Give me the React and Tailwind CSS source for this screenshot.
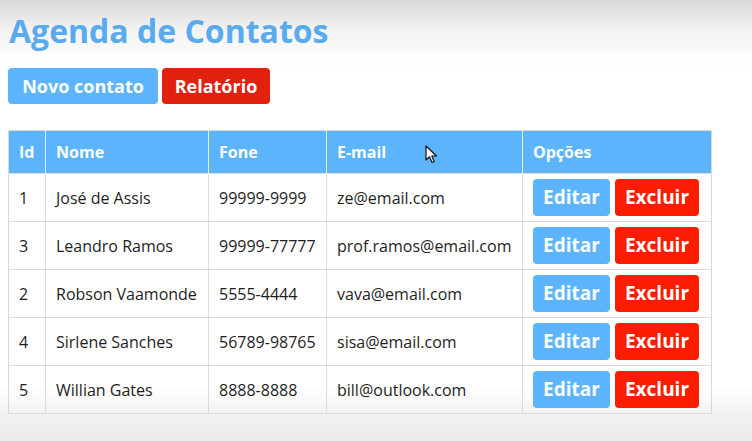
import React from 'react'

const contatos = [
  { id: 1, nome: 'José de Assis', fone: '99999-9999', email: 'ze@email.com' },
  { id: 3, nome: 'Leandro Ramos', fone: '99999-77777', email: 'prof.ramos@email.com' },
  { id: 2, nome: 'Robson Vaamonde', fone: '5555-4444', email: 'vava@email.com' },
  { id: 4, nome: 'Sirlene Sanches', fone: '56789-98765', email: 'sisa@email.com' },
  { id: 5, nome: 'Willian Gates', fone: '8888-8888', email: 'bill@outlook.com' },
]

function Cursor() {
  return (
    <svg className="absolute left-[425px] top-[145px]" width="14" height="20" viewBox="0 0 14 20">
      <path d="M1 1 L1 15 L4.5 11.8 L7 17.5 L9.2 16.5 L6.8 11 L11.5 11 Z" fill="#fff" stroke="#111" strokeWidth="1.2" strokeLinejoin="round" />
    </svg>
  )
}

export default function App() {
  return (
    <div className="relative min-h-screen bg-[linear-gradient(to_bottom,#d9d9d9_0px,#f3f3f3_30px,#fefefe_62px,#ffffff_80px,#ffffff_385px,#f0f0f0_420px,#ebebeb_441px)] px-2 pt-[9px] font-['Open_Sans',sans-serif] text-[#1e1e1e]">
      <h1 className="text-[32px] font-bold leading-[44px] text-[#5aaaee] pl-[1px]">Agenda de Contatos</h1>

      <div className="mt-[15px] flex gap-1">
        <button className="h-[36px] w-[150px] rounded-[4px] bg-[#5cb4fc] text-[18px] font-bold text-white">Novo contato</button>
        <button className="h-[36px] w-[108px] rounded-[4px] bg-[#e2200e] text-[18px] font-bold text-white">Relatório</button>
      </div>

      <table className="mt-[26px] w-[703px] table-fixed border-collapse border border-[#d8d8d8] text-[16px]">
        <colgroup>
          <col className="w-[37px]" />
          <col className="w-[163px]" />
          <col className="w-[118px]" />
          <col className="w-[196px]" />
          <col className="w-[189px]" />
        </colgroup>
        <thead>
          <tr className="h-[43px] bg-[#5cb4fc] text-left text-white">
            <th className="border-r border-[#e8f2fc] px-[10px] font-bold">Id</th>
            <th className="border-r border-[#e8f2fc] px-[10px] font-bold">Nome</th>
            <th className="border-r border-[#e8f2fc] px-[10px] font-bold">Fone</th>
            <th className="border-r border-[#e8f2fc] px-[10px] font-bold">E-mail</th>
            <th className="px-[10px] font-bold">Opções</th>
          </tr>
        </thead>
        <tbody>
          {contatos.map((c) => (
            <tr key={c.id} className="h-[48px] border-t border-[#dcdcdc]">
              <td className="border-r border-[#dcdcdc] px-[10px]">{c.id}</td>
              <td className="border-r border-[#dcdcdc] px-[10px] whitespace-nowrap">{c.nome}</td>
              <td className="border-r border-[#dcdcdc] px-[10px] whitespace-nowrap">{c.fone}</td>
              <td className="border-r border-[#dcdcdc] px-[10px] whitespace-nowrap">{c.email}</td>
              <td className="px-[10px]">
                <div className="flex gap-[5px]">
                  <button className="h-[37px] w-[77px] rounded-[4px] bg-[#5cb4fc] text-[19px] font-bold text-white">Editar</button>
                  <button className="h-[37px] w-[84px] rounded-[4px] bg-[#fc1c00] text-[19px] font-bold text-white">Excluir</button>
                </div>
              </td>
            </tr>
          ))}
        </tbody>
      </table>

      <Cursor />
    </div>
  )
}
